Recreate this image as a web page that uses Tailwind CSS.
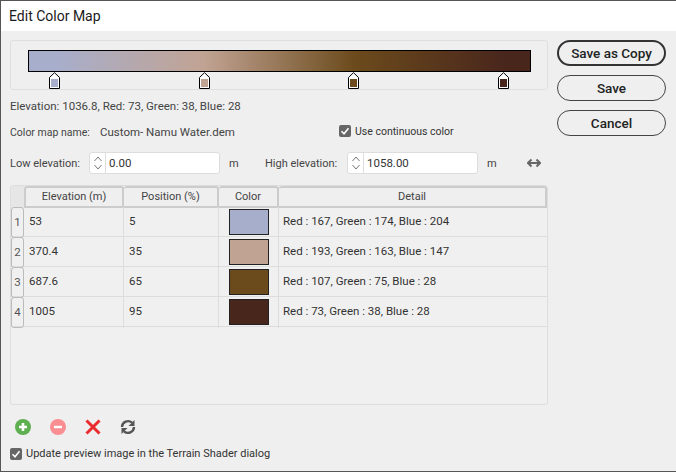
<!DOCTYPE html>
<html>
<head>
<meta charset="utf-8">
<title>Edit Color Map</title>
<script src="https://cdn.jsdelivr.net/npm/@tailwindcss/browser@4"></script>
</head>
<body class="m-0 overflow-hidden">
<div class="w-[676px] h-[472px] flex flex-col bg-[#efefef] border-t border-l border-b border-[#555555] font-['Roboto','Open_Sans',sans-serif] text-[11.5px] text-[#333333] whitespace-nowrap">
    <!-- Title bar -->
    <div class="h-[30px] shrink-0 bg-white flex items-center pl-[8px] text-[14px] text-[#1a1a1a]">Edit Color Map</div>

    <div class="flex flex-1 pl-[9px] pt-[9px]">
        <!-- Left column -->
        <div class="w-[538px] flex flex-col">
            <!-- Gradient editor -->
            <div class="relative h-[50px] shrink-0 border border-[#dfdfdf] rounded-[3px]">
                <div class="absolute left-[17px] top-[9px] w-[503px] h-[22px] border border-black bg-[linear-gradient(to_right,#a7aecc_5%,#c1a393_35%,#6b4b1c_65%,#49261c_95%)]"></div>
                <svg class="absolute left-[38px] top-[31px]" width="11" height="17" viewBox="0 0 11 17"><path d="M.5 5.500 5.500.7l5 4.800v11H.5z" fill="#fff" stroke="#000"/><rect x="2" y="7" width="7" height="8" fill="#a7aecc"/></svg>
                <svg class="absolute left-[188px] top-[31px]" width="11" height="17" viewBox="0 0 11 17"><path d="M.5 5.500 5.500.7l5 4.800v11H.5z" fill="#fff" stroke="#000"/><rect x="2" y="7" width="7" height="8" fill="#c1a393"/></svg>
                <svg class="absolute left-[337px] top-[31px]" width="11" height="17" viewBox="0 0 11 17"><path d="M.5 5.500 5.500.7l5 4.800v11H.5z" fill="#fff" stroke="#000"/><rect x="2" y="7" width="7" height="8" fill="#6b4b1c"/></svg>
                <svg class="absolute left-[487px] top-[31px]" width="11" height="17" viewBox="0 0 11 17"><path d="M.5 5.500 5.500.7l5 4.800v11H.5z" fill="#fff" stroke="#000"/><rect x="2" y="7" width="7" height="8" fill="#49261c"/></svg>
            </div>

            <div class="mt-[7px] h-[20px] flex items-center text-[#444444]">Elevation: 1036.8, Red: 73, Green: 38, Blue: 28</div>

            <div class="mt-[5px] h-[20px] flex items-center text-[10.5px] text-[#444444]">
                <span class="w-[90px] pt-[2px]">Color map name:</span>
                <span class="w-[239px] pt-[2px] text-[11.5px]">Custom- Namu Water.dem</span>
                <span class="w-[12px] h-[12px] -mt-[2px] rounded-[2px] bg-[#666666] flex items-center justify-center">
                    <svg width="10" height="10" viewBox="0 0 10 10"><path d="M1.500 5.200 4 7.700l4.500-5.500" fill="none" stroke="#fff" stroke-width="1.600"/></svg>
                </span>
                <span class="ml-[4px] text-[#333333]">Use continuous color</span>
            </div>

            <div class="mt-[10px] h-[22px] flex items-center text-[11px] text-[#444444]">
                <span class="w-[79px] pt-[3px]">Low elevation:</span>
                <div class="w-[131px] h-[22px] flex bg-white border border-[#dddddd] rounded-[3px]">
                    <div class="w-[16px] border-r border-[#dddddd] flex items-center justify-center">
                        <svg width="10" height="16" viewBox="0 0 10 16"><path d="M1.500 6 5 2l3.500 4M1.500 10 5 14l3.500-4" fill="none" stroke="#777777"/></svg>
                    </div>
                    <span class="pl-[3px] leading-[21px] text-[11.5px] text-[#333333]">0.00</span>
                </div>
                <span class="ml-[9px] w-[36px] pt-[3px]">m</span>
                <span class="w-[82px] pt-[3px]">High elevation:</span>
                <div class="w-[131px] h-[22px] flex bg-white border border-[#dddddd] rounded-[3px]">
                    <div class="w-[16px] border-r border-[#dddddd] flex items-center justify-center">
                        <svg width="10" height="16" viewBox="0 0 10 16"><path d="M1.500 6 5 2l3.500 4M1.500 10 5 14l3.500-4" fill="none" stroke="#777777"/></svg>
                    </div>
                    <span class="pl-[3px] leading-[21px] text-[11.5px] text-[#333333]">1058.00</span>
                </div>
                <span class="ml-[9px] w-[40px] pt-[3px]">m</span>
                <svg width="14" height="10" viewBox="0 0 14 10"><path d="M1 5h12M4.500 1.500 1 5l3.500 3.500M9.500 1.500 13 5 9.500 8.500" fill="none" stroke="#666666" stroke-width="2"/></svg>
            </div>

            <!-- Table -->
            <div class="mt-[11px] h-[220px] shrink-0 border border-[#dddddd] rounded-[3px] bg-[#f0f0f0] text-[#333333]">
                <div class="grid grid-cols-[13px_100px_95px_60px_268px] h-[21px] text-center text-[11px] leading-[18px] text-[#444444]">
                    <div class="bg-[#e6e6e6]"></div>
                    <div class="border-2 border-[#cccccc] rounded-t-[3px] bg-[#efefef]">Elevation (m)</div>
                    <div class="border-2 border-l-0 border-[#cccccc] rounded-t-[3px] bg-[#efefef]">Position (%)</div>
                    <div class="border-2 border-l-0 border-[#cccccc] rounded-t-[3px] bg-[#efefef]">Color</div>
                    <div class="border-2 border-l-0 border-[#cccccc] rounded-t-[3px] bg-[#efefef]">Detail</div>
                </div>
                <div class="grid grid-cols-[13px_100px_95px_60px_268px] h-[30px] items-stretch border-b border-[#dddddd] leading-[29px]">
                    <div class="border border-[#bbbbbb] rounded-[3px] text-center text-[#555555]">1</div>
                    <div class="pl-[5px] border-r border-[#dddddd]">53</div>
                    <div class="pl-[5px] border-r border-[#dddddd]">5</div>
                    <div class="flex items-start pt-[2px] justify-center border-r border-[#dddddd]"><div class="w-[40px] h-[26px] bg-[#a7aecc] border border-[#222222]"></div></div>
                    <div class="pl-[4px]">Red : 167, Green : 174, Blue : 204</div>
                </div>
                <div class="grid grid-cols-[13px_100px_95px_60px_268px] h-[30px] items-stretch border-b border-[#dddddd] leading-[29px]">
                    <div class="border border-[#bbbbbb] rounded-[3px] text-center text-[#555555]">2</div>
                    <div class="pl-[5px] border-r border-[#dddddd]">370.4</div>
                    <div class="pl-[5px] border-r border-[#dddddd]">35</div>
                    <div class="flex items-start pt-[2px] justify-center border-r border-[#dddddd]"><div class="w-[40px] h-[26px] bg-[#c1a393] border border-[#222222]"></div></div>
                    <div class="pl-[4px]">Red : 193, Green : 163, Blue : 147</div>
                </div>
                <div class="grid grid-cols-[13px_100px_95px_60px_268px] h-[30px] items-stretch border-b border-[#dddddd] leading-[29px]">
                    <div class="border border-[#bbbbbb] rounded-[3px] text-center text-[#555555]">3</div>
                    <div class="pl-[5px] border-r border-[#dddddd]">687.6</div>
                    <div class="pl-[5px] border-r border-[#dddddd]">65</div>
                    <div class="flex items-start pt-[2px] justify-center border-r border-[#dddddd]"><div class="w-[40px] h-[26px] bg-[#6b4b1c] border border-[#222222]"></div></div>
                    <div class="pl-[4px]">Red : 107, Green : 75, Blue : 28</div>
                </div>
                <div class="grid grid-cols-[13px_100px_95px_60px_268px] h-[30px] items-stretch border-b border-[#dddddd] leading-[29px]">
                    <div class="border border-[#bbbbbb] rounded-[3px] text-center text-[#555555]">4</div>
                    <div class="pl-[5px] border-r border-[#dddddd]">1005</div>
                    <div class="pl-[5px] border-r border-[#dddddd]">95</div>
                    <div class="flex items-start pt-[2px] justify-center border-r border-[#dddddd]"><div class="w-[40px] h-[26px] bg-[#49261c] border border-[#222222]"></div></div>
                    <div class="pl-[4px]">Red : 73, Green : 38, Blue : 28</div>
                </div>
            </div>

            <!-- Toolbar -->
            <div class="mt-[13px] pl-[5px] flex gap-[19px] items-center h-[18px]">
                <svg width="16" height="16" viewBox="0 0 16 16"><circle cx="8" cy="8" r="8" fill="#5eaf4f"/><path d="M8 4v8M4 8h8" stroke="#fff" stroke-width="2.600"/></svg>
                <svg width="16" height="16" viewBox="0 0 16 16"><circle cx="8" cy="8" r="8" fill="#fb8e92"/><path d="M4 8h8" stroke="#fff" stroke-width="2.400"/></svg>
                <svg width="16" height="16" viewBox="0 0 16 16"><path d="M1.500 1.500l13 13M14.500 1.500l-13 13" stroke="#ec2c2c" stroke-width="3"/></svg>
                <svg width="16" height="16" viewBox="0 0 16 16"><path d="M2 8a6 6 0 0 1 10-4.300M14 8a6 6 0 0 1-10 4.300" fill="none" stroke="#555555" stroke-width="2.400"/><path d="M14.500 1v6h-6zM1.500 15V9h6z" fill="#555555"/></svg>
            </div>

            <div class="mt-[11px] h-[14px] flex items-center text-[11px] text-[#333333]">
                <span class="w-[12px] h-[12px] rounded-[2px] bg-[#666666] flex items-center justify-center">
                    <svg width="10" height="10" viewBox="0 0 10 10"><path d="M1.500 5.200 4 7.700l4.500-5.500" fill="none" stroke="#fff" stroke-width="1.600"/></svg>
                </span>
                <span class="ml-[4px]">Update preview image in the Terrain Shader dialog</span>
            </div>
        </div>

        <!-- Right column -->
        <div class="ml-[9px] w-[109px] flex flex-col gap-[9px] font-medium text-[13.5px] text-[#222222]">
            <div class="h-[26px] rounded-full border-2 border-[#333333] flex items-center justify-center">Save as Copy</div>
            <div class="h-[26px] pt-px rounded-full border border-[#444444] flex items-center justify-center">Save</div>
            <div class="h-[26px] pt-px rounded-full border border-[#444444] flex items-center justify-center">Cancel</div>
        </div>
    </div>
</div>
</body>
</html>
